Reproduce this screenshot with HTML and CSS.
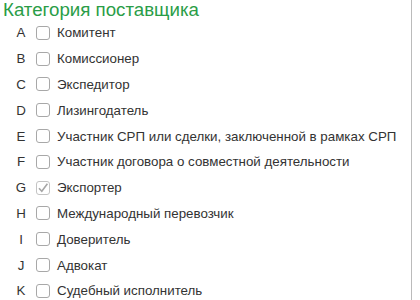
FILE: index.html
```html
<!DOCTYPE html>
<html lang="ru">
<head>
  <meta charset="UTF-8">
  <title>Категория поставщика</title>
  <link rel="stylesheet" href="styles.css">
</head>
<body>
<div class="panel">
  <div class="title">Категория поставщика</div>
  <div class="list">
    <div class="row"><span class="code">A</span><span class="box"></span><span class="label">Комитент</span></div>
    <div class="row"><span class="code">B</span><span class="box"></span><span class="label">Комиссионер</span></div>
    <div class="row"><span class="code">C</span><span class="box"></span><span class="label">Экспедитор</span></div>
    <div class="row"><span class="code">D</span><span class="box"></span><span class="label">Лизингодатель</span></div>
    <div class="row"><span class="code">E</span><span class="box"></span><span class="label">Участник СРП или сделки, заключенной в рамках СРП</span></div>
    <div class="row"><span class="code">F</span><span class="box"></span><span class="label">Участник договора о совместной деятельности</span></div>
    <div class="row"><span class="code">G</span><span class="box checked">
      <svg width="12" height="12" viewBox="0 0 12 12"><path d="M2 6.2 L4.8 9.2 L10.4 1.8" fill="none" stroke="#a6a6a6" stroke-width="1.6"/></svg>
    </span><span class="label">Экспортер</span></div>
    <div class="row"><span class="code">H</span><span class="box"></span><span class="label">Международный перевозчик</span></div>
    <div class="row"><span class="code">I</span><span class="box"></span><span class="label">Доверитель</span></div>
    <div class="row"><span class="code">J</span><span class="box"></span><span class="label">Адвокат</span></div>
    <div class="row"><span class="code">K</span><span class="box"></span><span class="label">Судебный исполнитель</span></div>
  </div>
</div>
</body>
</html>
```

FILE: styles.css
```css
body {
  margin: 0;
  font-family: "Liberation Sans", Arial, sans-serif;
  color: #333;
  background: #fff;
}
.panel {
  width: 411px;
  height: 300px;
  border-right: 1px solid #bbb;
  overflow: hidden;
}
.title {
  height: 20px;
  line-height: 20px;
  padding-left: 3px;
  font-size: 18.7px;
  color: #2a9d47;
}
.row {
  display: flex;
  align-items: center;
  height: 25.8px;
  padding-left: 8px;
  font-size: 13.33px;
}
.code {
  width: 26px;
  text-align: center;
}
.box {
  display: flex;
  align-items: center;
  justify-content: center;
  width: 12px;
  height: 12px;
  margin-left: 2px;
  border: 1px solid #a8a8a8;
  border-radius: 3px;
  background: #fff;
}
.box.checked {
  border-color: #c4c4c4;
}
.label {
  margin-left: 7px;
}
```
